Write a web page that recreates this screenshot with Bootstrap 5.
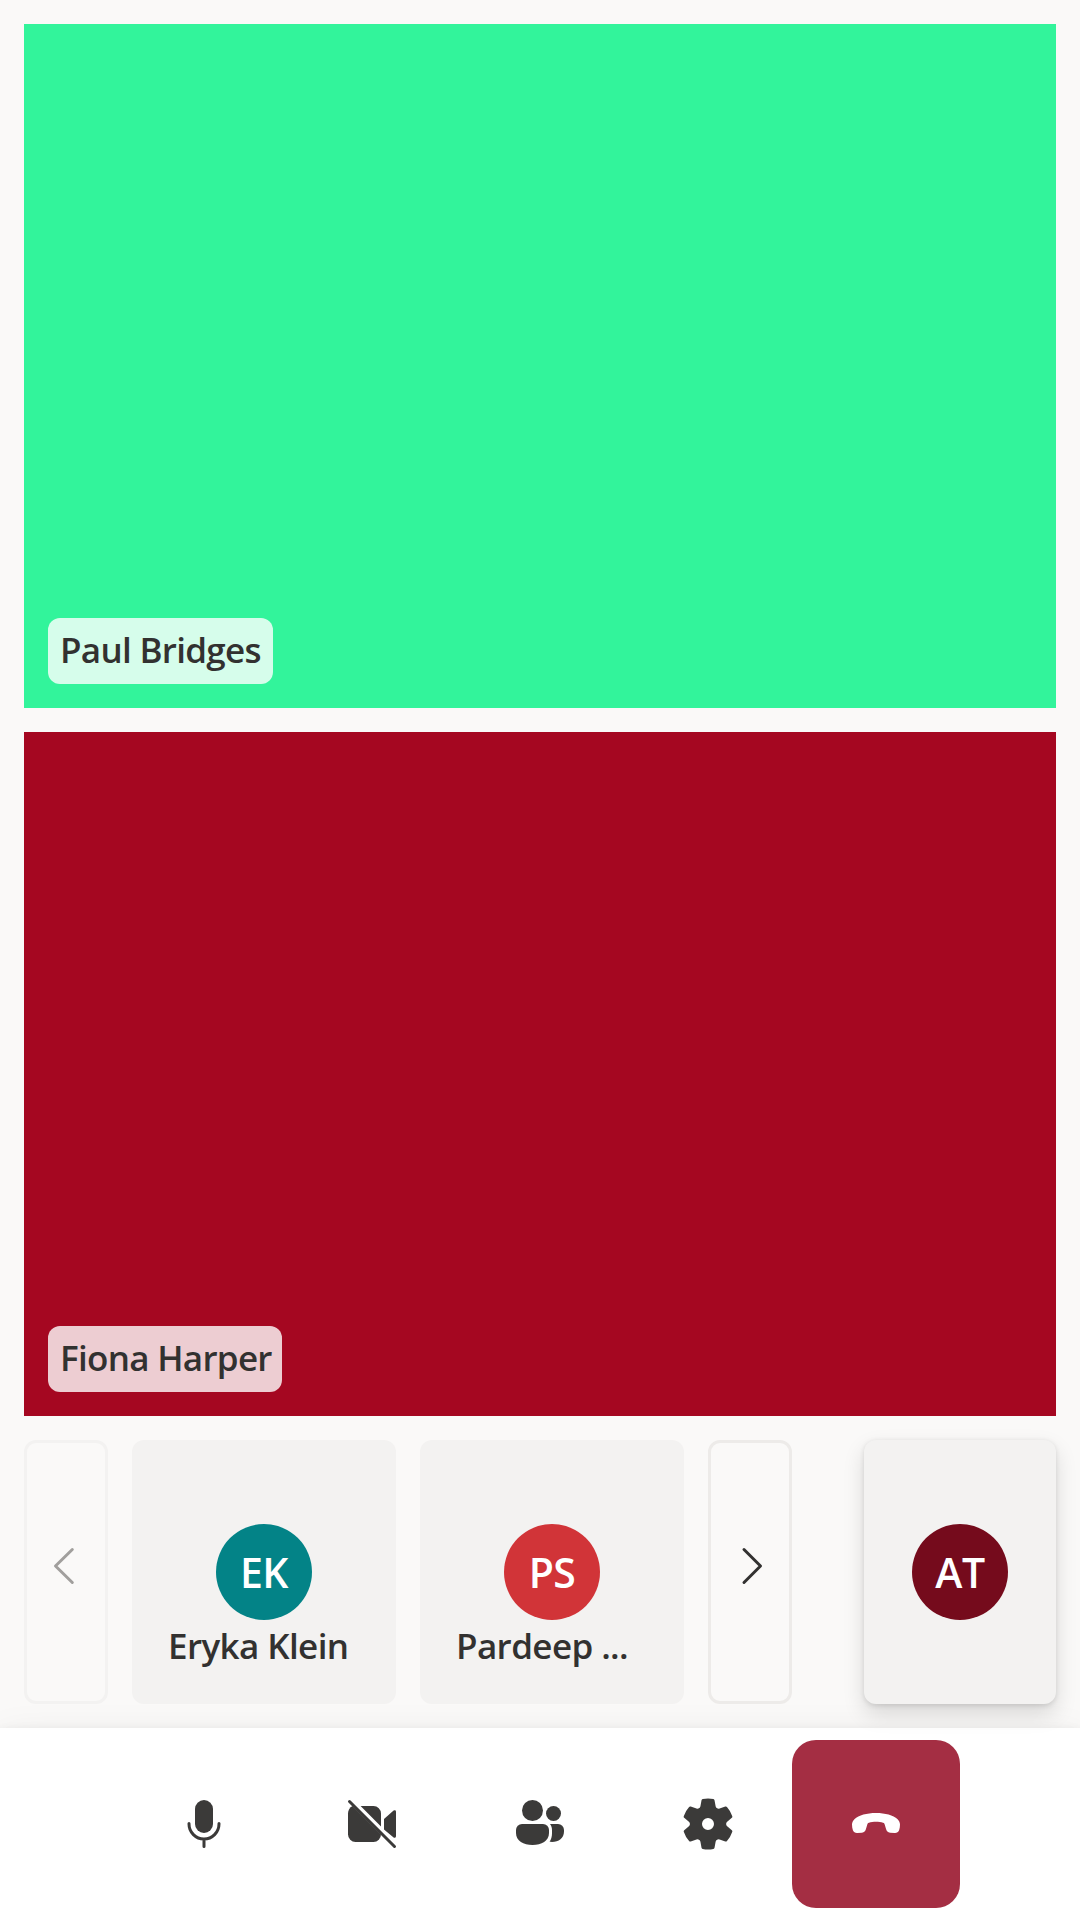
<!DOCTYPE html>
<html lang="en">
<head>
<meta charset="utf-8">
<meta name="viewport" content="width=device-width, initial-scale=1">
<title>Group call</title>
<link href="https://cdn.jsdelivr.net/npm/bootstrap@5.3.0/dist/css/bootstrap.min.css" rel="stylesheet">
<style>
  body { background: #faf9f8; color: #323130; font-family: "Open Sans", "Noto Sans", sans-serif; font-size: 35px; font-weight: 600; line-height: 48px; }
  .stage { padding: 24px; gap: 24px; min-height: 0; }
  .video-tile { flex: 1 1 0; padding: 24px; }
  .tile-green { background: #32f49b; }
  .tile-red { background: #a50721; }
  .name-tag { height: 66px; padding: 8px 0 0 12px; border-radius: 12px; background: rgba(255,255,255,.8); white-space: nowrap; }
  .tag-paul { width: 225px; letter-spacing: -.7px; }
  .tag-fiona { width: 234px; letter-spacing: -.7px; }
  .strip { height: 264px; gap: 24px; }
  .pager { width: 84px; padding: 0; border: 3px solid #edebe9; border-radius: 12px; background: transparent; color: #323130; }
  .pager:disabled { border-color: #f3f2f1; color: #a19f9d; opacity: 1; }
  .pager svg { margin-top: -12px; }
  .person { width: 264px; border-radius: 12px; background: #f3f2f1; padding-top: 84px; }
  .me { width: 192px; z-index: 2; box-shadow: 0 9.6px 21.6px rgba(0,0,0,.132), 0 1.8px 5.4px rgba(0,0,0,.108); }
  .avatar { width: 96px; height: 96px; padding-bottom: 1px; font-size: 41px; color: #fff; letter-spacing: -.5px; }
  .av-teal { background: #038387; }
  .av-red { background: #d13438; }
  .av-wine { background: #750b1c; }
  .person-name { width: 192px; height: 50px; padding-top: 2px; letter-spacing: -.6px; white-space: nowrap; overflow: hidden; }
  .controls { height: 192px; background: #fff; box-shadow: 0 19.2px 43.2px rgba(0,0,0,.132), 0 3.6px 10.8px rgba(0,0,0,.108); }
  .ctl { width: 168px; height: 168px; padding: 0; border: 0; border-radius: 24px; color: #3b3a39; }
  .ctl-end { background: #a42e43; color: #fff; }
  .glyph { width: 60px; height: 60px; fill: currentColor; flex: none; }
  .glyph-line { fill: none; stroke: currentColor; stroke-linecap: round; stroke-linejoin: round; }
</style>
<script src="https://cdn.jsdelivr.net/npm/bootstrap@5.3.0/dist/js/bootstrap.bundle.min.js"></script>
</head>
<body class="vh-100 d-flex flex-column overflow-hidden">
  <main class="stage flex-grow-1 d-flex flex-column">
    <section class="video-tile tile-green d-flex align-items-end">
      <div class="name-tag tag-paul">Paul Bridges</div>
    </section>
    <section class="video-tile tile-red d-flex align-items-end">
      <div class="name-tag tag-fiona">Fiona Harper</div>
    </section>
    <section class="strip d-flex">
      <button class="pager btn d-flex align-items-center justify-content-center" type="button" disabled aria-label="Previous">
        <svg class="glyph glyph-line" viewBox="0 0 20 20"><path d="M12.1 4.5 6.5 10l5.6 5.5"/></svg>
      </button>
      <div class="person d-flex flex-column align-items-center">
        <div class="avatar av-teal rounded-circle d-flex align-items-center justify-content-center">EK</div>
        <div class="person-name">Eryka Klein</div>
      </div>
      <div class="person d-flex flex-column align-items-center">
        <div class="avatar av-red rounded-circle d-flex align-items-center justify-content-center">PS</div>
        <div class="person-name">Pardeep ...</div>
      </div>
      <button class="pager btn d-flex align-items-center justify-content-center" type="button" aria-label="Next">
        <svg class="glyph glyph-line" viewBox="0 0 20 20"><path d="M8 4.5 13.5 10 8 15.5"/></svg>
      </button>
      <div class="person me ms-auto position-relative d-flex flex-column align-items-center">
        <div class="avatar av-wine rounded-circle d-flex align-items-center justify-content-center">AT</div>
      </div>
    </section>
  </main>
  <nav class="controls d-flex align-items-center justify-content-center" aria-label="Call controls">
    <button class="ctl btn d-flex align-items-center justify-content-center" type="button" aria-label="Microphone">
      <svg class="glyph" viewBox="0 0 20 20"><rect x="7" y="2" width="6" height="11" rx="3"/><path class="glyph-line" d="M5 9.8V10a5 5 0 0 0 10 0v-.2M10 15v2.5"/></svg>
    </button>
    <button class="ctl btn d-flex align-items-center justify-content-center" type="button" aria-label="Camera off">
      <svg class="glyph" viewBox="0 0 20 20"><path d="M3.5 4 13 13.5A2.5 2.5 0 0 1 10.5 16h-6A2.5 2.5 0 0 1 2 13.5v-7C2 5.4 2.6 4.5 3.5 4Z"/><path d="M6.2 4h4.3A2.5 2.5 0 0 1 13 6.5v4.3Z"/><path d="M14 8.3 17.2 5.5a.5.5 0 0 1 .8.4v8.2a.5.5 0 0 1-.8.4L14 11.8Z"/><path class="glyph-line" d="m2.5 2.5 15 15"/></svg>
    </button>
    <button class="ctl btn d-flex align-items-center justify-content-center" type="button" aria-label="People">
      <svg class="glyph" viewBox="0 0 20 20"><circle cx="7.5" cy="5.5" r="3.5"/><circle cx="14.5" cy="6.5" r="2.5"/><path d="M4 10h7a2 2 0 0 1 2 2v1c0 2.7-2.5 4-5.500 4S2 15.700 2 13v-1a2 2 0 0 1 2-2Z"/><path d="M13.33 10c.42.5.67 1.2.67 2v1.2c0 1.1-.3 2-.8 2.75.3.04.5.05.8.05 2.2 0 4-1.3 4-3.5V12a2 2 0 0 0-2-2Z"/></svg>
    </button>
    <button class="ctl btn d-flex align-items-center justify-content-center" type="button" aria-label="Settings">
      <svg class="glyph" viewBox="0 0 20 20"><path fill-rule="evenodd" d="M1.91 7.38A8.5 8.5 0 0 1 3.7 4.3a.5.5 0 0 1 .54-.13l1.92.68a1 1 0 0 0 1.32-.76l.36-2a.5.5 0 0 1 .4-.4 8.53 8.53 0 0 1 3.55 0c.2.04.35.2.38.4l.37 2a1 1 0 0 0 1.32.76l1.92-.68a.5.5 0 0 1 .54.13 8.5 8.5 0 0 1 1.78 3.08c.06.2 0 .4-.15.54l-1.56 1.32a1 1 0 0 0 0 1.52l1.56 1.32a.5.5 0 0 1 .15.54 8.5 8.5 0 0 1-1.78 3.08.5.5 0 0 1-.54.13l-1.92-.68a1 1 0 0 0-1.32.76l-.37 2a.5.5 0 0 1-.38.4 8.53 8.53 0 0 1-3.56 0 .5.5 0 0 1-.39-.4l-.36-2a1 1 0 0 0-1.32-.76l-1.92.68a.5.5 0 0 1-.54-.13 8.5 8.5 0 0 1-1.78-3.08.5.5 0 0 1 .15-.54l1.56-1.32a1 1 0 0 0 0-1.52L2.06 7.92a.5.5 0 0 1-.15-.54ZM8 10a2 2 0 1 0 4 0 2 2 0 0 0-4 0Z"/></svg>
    </button>
    <button class="ctl ctl-end btn d-flex align-items-center justify-content-center" type="button" aria-label="Hang up">
      <svg class="glyph" viewBox="0 0 20 20"><path d="M10 6.3c3.1 0 5.7.7 7.2 2.1.5.5.8 1.1.8 1.8 0 .7-.1 1.3-.3 1.9-.3.7-.8.95-1.5.9l-1.5-.1c-.8-.1-1.15-.5-1.35-1.2l-.4-1.4c-.1-.4-.2-.6-.6-.75-1.3-.45-3.4-.45-4.7 0-.4.15-.5.35-.6.75l-.4 1.4c-.2.7-.55 1.1-1.35 1.2l-1.5.1c-.7.05-1.2-.2-1.5-.9-.2-.6-.3-1.2-.3-1.9 0-.7.3-1.300.8-1.800 1.500-1.400 4.100-2.100 7.200-2.100Z"/></svg>
    </button>
  </nav>
</body>
</html>
